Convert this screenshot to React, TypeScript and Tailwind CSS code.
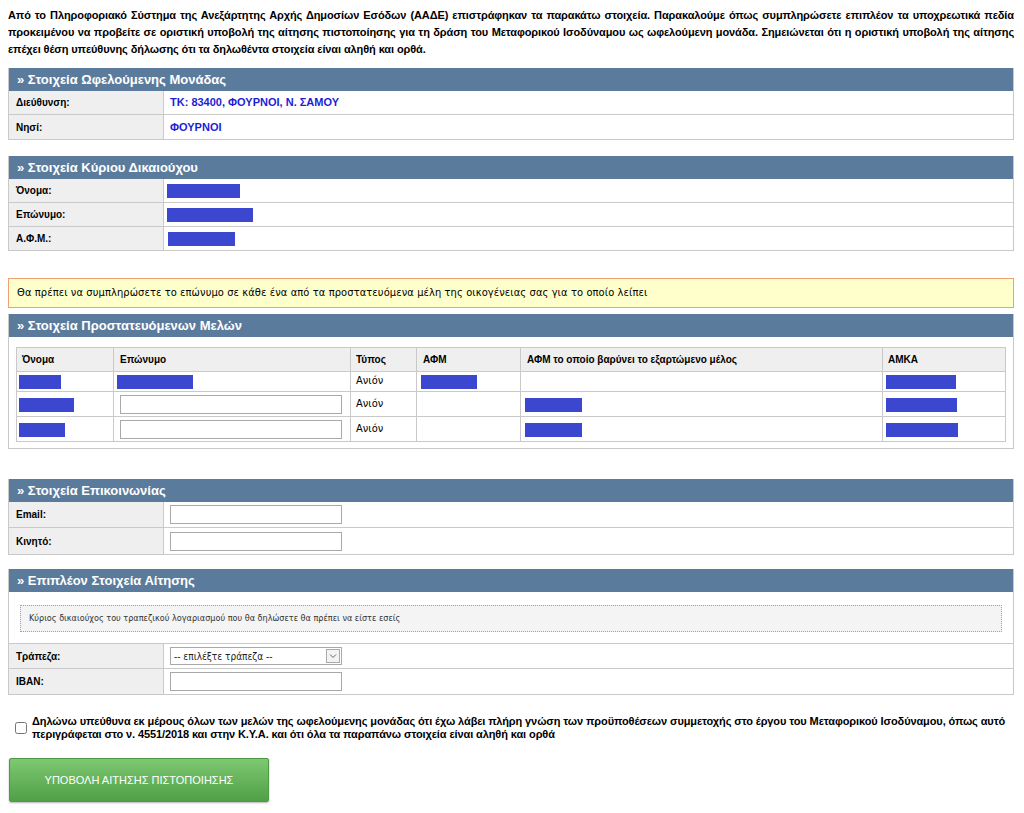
import React from 'react';

const Redact: React.FC<{ w: number }> = ({ w }) => (
  <span
    className="inline-block h-[14px] bg-[#3b47cf] align-middle"
    style={{ width: w }}
  />
);

const SectionHeader: React.FC<{ title: string }> = ({ title }) => (
  <div className="h-[23px] bg-[#5b7b9c] px-[8px] flex items-center text-white font-bold text-[13px]">
    » {title}
  </div>
);

const Row: React.FC<{ label: string; children?: React.ReactNode; h?: string; last?: boolean }> = ({
  label,
  children,
  h = 'h-[24px]',
  last,
}) => (
  <div className={`flex ${h} ${last ? '' : 'border-b border-[#c9c9c9]'}`}>
    <div className="w-[155px] shrink-0 bg-[#efefef] border-r border-[#c9c9c9] flex items-center pl-[7px] text-[10px] font-bold text-black">
      {label}
    </div>
    <div className="flex-1 flex items-center pl-[6px]">{children}</div>
  </div>
);

const TextInput: React.FC = () => (
  <input
    type="text"
    className="w-[172px] h-[19px] border border-[#a9a9a9] bg-white outline-none"
  />
);

export default function App() {
  const members = [
    { name: 42, surname: 76, input: false, afm: 56, afmDep: 0, amka: 70 },
    { name: 55, surname: 0, input: true, afm: 0, afmDep: 57, amka: 71 },
    { name: 46, surname: 0, input: true, afm: 0, afmDep: 57, amka: 72 },
  ];

  return (
    <div className="font-['Liberation_Sans',Arial,sans-serif] bg-white text-black min-h-[813px] pl-[8px] pr-[10px] pt-[7px]">
      {/* Intro */}
      <p className="text-[11px] font-bold leading-[17px] text-justify tracking-[-0.1px]">
        Από το Πληροφοριακό Σύστημα της Ανεξάρτητης Αρχής Δημοσίων Εσόδων (ΑΑΔΕ) επιστράφηκαν τα παρακάτω
        στοιχεία. Παρακαλούμε όπως συμπληρώσετε επιπλέον τα υποχρεωτικά πεδία προκειμένου να προβείτε σε
        οριστική υποβολή της αίτησης πιστοποίησης για τη δράση του Μεταφορικού Ισοδύναμου ως ωφελούμενη
        μονάδα. Σημειώνεται ότι η οριστική υποβολή της αίτησης επέχει θέση υπεύθυνης δήλωσης ότι τα
        δηλωθέντα στοιχεία είναι αληθή και ορθά.
      </p>

      {/* Στοιχεία Ωφελούμενης Μονάδας */}
      <div className="mt-[10px] border border-[#c9c9c9] border-t-0">
        <SectionHeader title="Στοιχεία Ωφελούμενης Μονάδας" />
        <Row label="Διεύθυνση:">
          <span className="text-[11px] font-bold text-[#1d1dd6]">ΤΚ: 83400, ΦΟΥΡΝΟΙ, Ν. ΣΑΜΟΥ</span>
        </Row>
        <Row label="Νησί:" last>
          <span className="text-[11px] font-bold text-[#1d1dd6]">ΦΟΥΡΝΟΙ</span>
        </Row>
      </div>

      {/* Στοιχεία Κύριου Δικαιούχου */}
      <div className="mt-[16px] border border-[#c9c9c9] border-t-0">
        <SectionHeader title="Στοιχεία Κύριου Δικαιούχου" />
        <Row label="Όνομα:">
          <span className="ml-[-3px]"><Redact w={73} /></span>
        </Row>
        <Row label="Επώνυμο:">
          <span className="ml-[-3px]"><Redact w={86} /></span>
        </Row>
        <Row label="Α.Φ.Μ.:" h="h-[23px]" last>
          <span className="ml-[-2px]"><Redact w={67} /></span>
        </Row>
      </div>

      {/* Warning */}
      <div className="mt-[27px] h-[30px] bg-[#ffffcc] border border-[#f0a070] flex items-center pl-[8px] text-[11px] font-['DejaVu_Sans_Condensed','DejaVu_Sans',sans-serif] tracking-[0.1px]">
        Θα πρέπει να συμπληρώσετε το επώνυμο σε κάθε ένα από τα προστατευόμενα μέλη της οικογένειας σας για το οποίο λείπει
      </div>

      {/* Στοιχεία Προστατευόμενων Μελών */}
      <div className="mt-[6px] border border-[#c9c9c9] border-t-0 pb-[6px]">
        <SectionHeader title="Στοιχεία Προστατευόμενων Μελών" />
        <div className="px-[7px] pt-[10px]">
          <table className="w-full border-collapse text-[10px]">
            <thead>
              <tr className="h-[24px] bg-[#efefef] text-left">
                <th className="w-[97px] border border-[#c9c9c9] pl-[5px] font-bold">Όνομα</th>
                <th className="w-[237px] border border-[#c9c9c9] pl-[6px] font-bold">Επώνυμο</th>
                <th className="w-[66px] border border-[#c9c9c9] pl-[5px] font-bold">Τύπος</th>
                <th className="w-[104px] border border-[#c9c9c9] pl-[6px] font-bold">ΑΦΜ</th>
                <th className="w-[362px] border border-[#c9c9c9] pl-[6px] font-bold">ΑΦΜ το οποίο βαρύνει το εξαρτώμενο μέλος</th>
                <th className="border border-[#c9c9c9] pl-[5px] font-bold">ΑΜΚΑ</th>
              </tr>
            </thead>
            <tbody>
              {members.map((m, i) => (
                <tr key={i} className={i === 0 ? 'h-[20px]' : 'h-[25px]'}>
                  <td className="border border-[#c9c9c9] pl-[2px]">
                    <Redact w={m.name} />
                  </td>
                  <td className="border border-[#c9c9c9] pl-[3px]">
                    {m.input ? (
                      <input
                        type="text"
                        className="block w-[222px] h-[19px] ml-[3px] border border-[#a9a9a9] outline-none"
                      />
                    ) : (
                      <Redact w={m.surname} />
                    )}
                  </td>
                  <td className="border border-[#c9c9c9] pl-[5px] text-[11px] font-['DejaVu_Sans_Condensed','DejaVu_Sans',sans-serif]">
                    Ανιόν
                  </td>
                  <td className="border border-[#c9c9c9] pl-[4px]">
                    {m.afm ? <Redact w={m.afm} /> : null}
                  </td>
                  <td className="border border-[#c9c9c9] pl-[4px]">
                    {m.afmDep ? <Redact w={m.afmDep} /> : null}
                  </td>
                  <td className="border border-[#c9c9c9] pl-[3px]">
                    <Redact w={m.amka} />
                  </td>
                </tr>
              ))}
            </tbody>
          </table>
        </div>
      </div>

      {/* Στοιχεία Επικοινωνίας */}
      <div className="mt-[30px] border border-[#c9c9c9] border-t-0">
        <SectionHeader title="Στοιχεία Επικοινωνίας" />
        <Row label="Email:" h="h-[26px]">
          <TextInput />
        </Row>
        <Row label="Κινητό:" h="h-[26px]" last>
          <TextInput />
        </Row>
      </div>

      {/* Επιπλέον Στοιχεία Αίτησης */}
      <div className="mt-[14px] border border-[#c9c9c9] border-t-0">
        <SectionHeader title="Επιπλέον Στοιχεία Αίτησης" />
        <div className="px-[11px] pt-[13px] pb-[11px] border-b border-[#c9c9c9]">
          <div className="h-[27px] bg-[#f4f4f4] border border-dotted border-[#a0a0a0] flex items-center pl-[8px] text-[9px] text-[#333] font-['DejaVu_Sans_Condensed','DejaVu_Sans',sans-serif]">
            Κύριος δικαιούχος του τραπεζικού λογαριασμού που θα δηλώσετε θα πρέπει να είστε εσείς
          </div>
        </div>
        <Row label="Τράπεζα:" h="h-[25px]">
          <div className="w-[172px] h-[18px] border border-[#a9a9a9] bg-white flex items-center justify-between pl-[3px] pr-[1px]">
            <span className="text-[10px] text-[#222] font-['DejaVu_Sans_Condensed','DejaVu_Sans',sans-serif]">-- επιλέξτε τράπεζα --</span>
            <span className="w-[14px] h-[14px] border border-[#a9a9a9] bg-[#f3f3f3] flex items-center justify-center">
              <svg width="8" height="6" viewBox="0 0 8 6">
                <path d="M1 1.5 L4 4.5 L7 1.5" fill="none" stroke="#666" strokeWidth="1" />
              </svg>
            </span>
          </div>
        </Row>
        <Row label="IBAN:" h="h-[25px]" last>
          <TextInput />
        </Row>
      </div>

      {/* Declaration */}
      <div className="mt-[20px] flex items-start pl-[7px]">
        <input type="checkbox" className="w-[12px] h-[12px] mt-[7px] shrink-0 accent-[#555]" />
        <p className="ml-[5px] text-[11px] font-bold leading-[13px] tracking-[-0.1px]">
          Δηλώνω υπεύθυνα εκ μέρους όλων των μελών της ωφελούμενης μονάδας ότι έχω λάβει πλήρη γνώση των
          προϋποθέσεων συμμετοχής στο έργου του Μεταφορικού Ισοδύναμου, όπως αυτό περιγράφεται στο ν. 4551/2018
          και στην Κ.Υ.Α. και ότι όλα τα παραπάνω στοιχεία είναι αληθή και ορθά
        </p>
      </div>

      {/* Submit */}
      <button className="mt-[17px] ml-[1px] w-[260px] h-[44px] rounded-[2px] border border-[#4c9a44] bg-gradient-to-b from-[#7ec872] to-[#4fa046] text-white text-[11px] shadow-[0_1px_2px_rgba(0,0,0,0.3)]">
        ΥΠΟΒΟΛΗ ΑΙΤΗΣΗΣ ΠΙΣΤΟΠΟΙΗΣΗΣ
      </button>
    </div>
  );
}
